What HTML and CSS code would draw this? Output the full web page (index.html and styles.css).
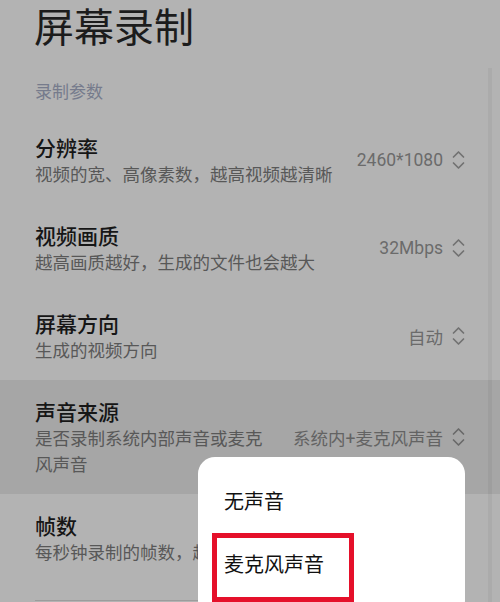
FILE: index.html
```html
<!DOCTYPE html>
<html lang="zh-CN">
<head>
<meta charset="utf-8">
<title>屏幕录制</title>
<link rel="stylesheet" href="styles.css">
</head>
<body>
<div class="page">
  <h1 class="title">屏幕录制</h1>
  <div class="section-label">录制参数</div>
  <div class="list">
    <div class="row">
      <div class="text">
        <div class="row-title">分辨率</div>
        <div class="row-sub">视频的宽、高像素数，越高视频越清晰</div>
      </div>
      <div class="value"><span class="value-text">2460*1080</span>
        <svg class="chev" width="13" height="22" viewBox="0 0 13 22"><path d="M1.5 8 L6.5 3 L11.5 8 M1.5 14 L6.5 19 L11.5 14" fill="none" stroke="#727272" stroke-width="1.7" stroke-linecap="round" stroke-linejoin="round"/></svg>
      </div>
    </div>
    <div class="row">
      <div class="text">
        <div class="row-title">视频画质</div>
        <div class="row-sub">越高画质越好，生成的文件也会越大</div>
      </div>
      <div class="value"><span class="value-text">32Mbps</span>
        <svg class="chev" width="13" height="22" viewBox="0 0 13 22"><path d="M1.5 8 L6.5 3 L11.5 8 M1.5 14 L6.5 19 L11.5 14" fill="none" stroke="#727272" stroke-width="1.7" stroke-linecap="round" stroke-linejoin="round"/></svg>
      </div>
    </div>
    <div class="row">
      <div class="text">
        <div class="row-title">屏幕方向</div>
        <div class="row-sub">生成的视频方向</div>
      </div>
      <div class="value"><span class="value-text">自动</span>
        <svg class="chev" width="13" height="22" viewBox="0 0 13 22"><path d="M1.5 8 L6.5 3 L11.5 8 M1.5 14 L6.5 19 L11.5 14" fill="none" stroke="#727272" stroke-width="1.7" stroke-linecap="round" stroke-linejoin="round"/></svg>
      </div>
    </div>
    <div class="row active">
      <div class="text">
        <div class="row-title">声音来源</div>
        <div class="row-sub">是否录制系统内部声音或麦克风声音</div>
      </div>
      <div class="value"><span class="value-text">系统内+麦克风声音</span>
        <svg class="chev" width="13" height="22" viewBox="0 0 13 22"><path d="M1.5 8 L6.5 3 L11.5 8 M1.5 14 L6.5 19 L11.5 14" fill="none" stroke="#6a6a6a" stroke-width="1.7" stroke-linecap="round" stroke-linejoin="round"/></svg>
      </div>
    </div>
    <div class="row">
      <div class="text">
        <div class="row-title">帧数</div>
        <div class="row-sub">每秒钟录制的帧数，越高越流畅</div>
      </div>
      <div class="value"><span class="value-text">60FPS</span>
        <svg class="chev" width="13" height="22" viewBox="0 0 13 22"><path d="M1.5 8 L6.5 3 L11.5 8 M1.5 14 L6.5 19 L11.5 14" fill="none" stroke="#727272" stroke-width="1.7" stroke-linecap="round" stroke-linejoin="round"/></svg>
      </div>
    </div>
  </div>
  <div class="divider"></div>
</div>
<div class="scrollbar"></div>
<div class="menu">
  <div class="menu-item">无声音</div>
  <div class="menu-item">麦克风声音</div>
  <div class="highlight-box"></div>
</div>
</body>
</html>
```

FILE: styles.css
```css
html, body {
  margin: 0;
  padding: 0;
}
body {
  width: 500px;
  height: 602px;
  overflow: hidden;
  position: relative;
  background: #b3b3b3;
  font-family: "Noto Sans CJK SC", "Noto Sans", sans-serif;
}
.page {
  display: flex;
  flex-direction: column;
}
.title {
  margin: 0;
  padding: 1px 0 0 34px;
  font-size: 40px;
  line-height: 48px;
  font-weight: 400;
  color: #1c1c1c;
}
.section-label {
  margin-top: 30px;
  padding-left: 35px;
  font-size: 17px;
  line-height: 24px;
  color: #767b8c;
}
.list {
  margin-top: 13px;
  display: flex;
  flex-direction: column;
}
.row {
  display: flex;
  align-items: center;
  gap: 14px;
  padding: 17.5px 35px;
}
.row.active {
  background: #a6a6a6;
}
.text {
  flex: 1 1 auto;
  min-width: 0;
}
.row-title {
  font-size: 21px;
  line-height: 27px;
  font-weight: 500;
  color: #161616;
}
.row-sub {
  font-size: 17.5px;
  line-height: 26px;
  color: #585858;
}
.value {
  flex: 0 0 auto;
  display: flex;
  align-items: center;
  gap: 9px;
}
.value-text {
  font-family: "Roboto", "Noto Sans CJK SC", sans-serif;
  font-size: 17.5px;
  color: #6b6b6b;
}
.row.active .value-text {
  color: #636363;
}
.chev {
  display: block;
}
.divider {
  margin: 18px 35px 0;
  height: 1px;
  background: #9c9c9c;
}
.scrollbar {
  position: absolute;
  left: 488px;
  top: 68px;
  bottom: 0;
  width: 4px;
  background: rgba(0, 0, 0, 0.045);
}
.menu {
  position: absolute;
  left: 198px;
  top: 457px;
  width: 267px;
  height: 160px;
  box-sizing: border-box;
  padding-top: 12px;
  background: #ffffff;
  border-radius: 17px;
}
.menu-item {
  height: 63px;
  display: flex;
  align-items: center;
  padding-left: 26px;
  font-size: 20px;
  color: #111111;
}
.highlight-box {
  position: absolute;
  left: 14px;
  top: 76px;
  width: 142px;
  height: 69px;
  box-sizing: border-box;
  border: 5px solid #e5102a;
}
```
